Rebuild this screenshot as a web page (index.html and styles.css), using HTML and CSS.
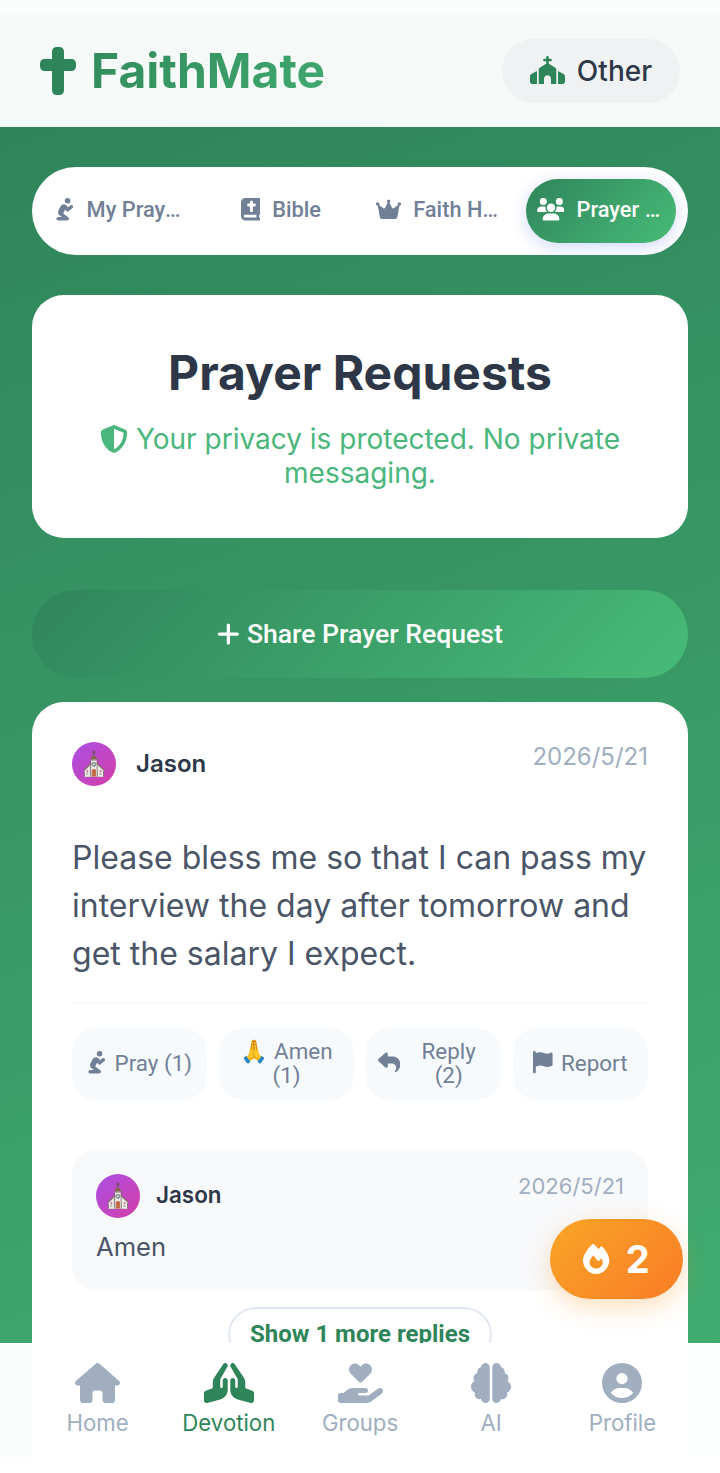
FILE: index.html
```html
<!DOCTYPE html>
<html lang="en">
<head>
    <meta charset="UTF-8">
    <meta name="viewport" content="width=device-width, initial-scale=1.0">
    <title>FaithMate</title>
    <link rel="stylesheet" href="styles.css">
</head>
<body>
    <div class="app">
        <div class="top-strip"></div>
        <header class="header">
            <div class="logo">
                <svg class="logo-icon" viewBox="0 0 384 512"><path d="M176 0c-26.5 0-48 21.5-48 48v80H48c-26.5 0-48 21.5-48 48v32c0 26.5 21.5 48 48 48h80V464c0 26.5 21.5 48 48 48h32c26.5 0 48-21.5 48-48V256h80c26.5 0 48-21.5 48-48V176c0-26.5-21.5-48-48-48H256V48c0-26.5-21.5-48-48-48H176z"/></svg>
                <span class="logo-text">FaithMate</span>
            </div>
            <div class="denom">
                <svg class="denom-icon" viewBox="0 0 640 512"><path d="M344 24c0-13.3-10.7-24-24-24s-24 10.7-24 24V48H264c-13.3 0-24 10.7-24 24s10.7 24 24 24h32v46.4L183.3 210c-14.5 8.7-23.3 24.3-23.3 41.2V512h96V416c0-35.3 28.7-64 64-64s64 28.7 64 64v96h96V251.2c0-16.9-8.8-32.5-23.3-41.2L344 142.4V96h32c13.3 0 24-10.7 24-24s-10.7-24-24-24H344V24zM24.9 330.3C9.5 338.8 0 354.9 0 372.4V464c0 26.5 21.5 48 48 48h80V273.6L24.9 330.3zM592 512c26.5 0 48-21.5 48-48V372.4c0-17.5-9.5-33.6-24.9-42.1L512 273.6V512h80z"/></svg>
                <span>Other</span>
            </div>
        </header>

        <main class="main">
            <nav class="tabs">
                <div class="tab">
                    <svg class="tab-icon" viewBox="0 0 448 512"><path d="M352 64A64 64 0 1 0 224 64a64 64 0 1 0 128 0zM232.7 264l22.9 31.5c6.5 8.9 16.3 14.7 27.2 16.1s21.9-1.7 30.4-8.7l88-72c17.1-14 19.6-39.2 5.6-56.3s-39.2-19.6-56.3-5.6l-55.2 45.2-26.2-36C253.6 156.7 228.6 144 202 144c-30.9 0-59.2 17.1-73.6 44.4L79.8 280.9c-20.2 38.5-9.4 85.9 25.6 111.8L158.6 432H72c-22.1 0-40 17.9-40 40s17.9 40 40 40H280c17.3 0 32.6-11.1 38-27.5s-.3-34.4-14.2-44.7L187.7 354l45-90z"/></svg>
                    <span class="tab-label">My Prayers</span>
                </div>
                <div class="tab">
                    <svg class="tab-icon" viewBox="0 0 448 512"><path d="M96 0C43 0 0 43 0 96V416c0 53 43 96 96 96H384h32c17.7 0 32-14.3 32-32s-14.3-32-32-32V384c17.7 0 32-14.3 32-32V32c0-17.7-14.3-32-32-32H384 96zm0 384H352v64H96c-17.7 0-32-14.3-32-32s14.3-32 32-32zM208 80c0-8.8 7.2-16 16-16h32c8.8 0 16 7.2 16 16v48h48c8.8 0 16 7.2 16 16v32c0 8.8-7.2 16-16 16H272V304c0 8.8-7.2 16-16 16H224c-8.8 0-16-7.2-16-16V192H160c-8.8 0-16-7.2-16-16V144c0-8.8 7.2-16 16-16h48V80z"/></svg>
                    <span class="tab-label">Bible</span>
                </div>
                <div class="tab">
                    <svg class="tab-icon" viewBox="0 0 576 512"><path d="M309 106c11.4-7 19-19.7 19-34c0-22.1-17.9-40-40-40s-40 17.9-40 40c0 14.4 7.6 27 19 34L209.7 220.6c-9.1 18.2-32.7 23.4-48.6 10.7L72 160c5-6.7 8-15 8-24c0-22.1-17.9-40-40-40S0 113.9 0 136s17.9 40 40 40c.2 0 .5 0 .7 0L86.4 427.4c5.5 30.4 32 52.6 63 52.6H426.6c30.9 0 57.4-22.1 63-52.6L535.3 176c.2 0 .5 0 .7 0c22.1 0 40-17.9 40-40s-17.9-40-40-40s-40 17.9-40 40c0 9 3 17.3 8 24l-89.1 71.3c-15.9 12.7-39.5 7.5-48.6-10.7L309 106z"/></svg>
                    <span class="tab-label">Faith Heroes</span>
                </div>
                <div class="tab active">
                    <svg class="tab-icon" viewBox="0 0 640 512"><path d="M144 0a80 80 0 1 1 0 160A80 80 0 1 1 144 0zM512 0a80 80 0 1 1 0 160A80 80 0 1 1 512 0zM0 298.7C0 239.8 47.8 192 106.7 192h42.7c15.9 0 31 3.5 44.6 9.7c-1.3 7.2-1.9 14.7-1.9 22.3c0 38.2 16.8 72.5 43.3 96c-.2 0-.4 0-.7 0H21.3C9.6 320 0 310.4 0 298.7zM405.3 320c-.2 0-.4 0-.7 0c26.6-23.5 43.3-57.8 43.3-96c0-7.6-.7-15-1.9-22.3c13.6-6.3 28.7-9.7 44.6-9.7h42.7C592.2 192 640 239.8 640 298.7c0 11.8-9.6 21.3-21.3 21.3H405.3zM224 224a96 96 0 1 1 192 0 96 96 0 1 1 -192 0zM128 485.3C128 411.7 187.7 352 261.3 352H378.7C452.3 352 512 411.7 512 485.3c0 14.7-11.9 26.7-26.7 26.7H154.7c-14.7 0-26.7-11.9-26.7-26.7z"/></svg>
                    <span class="tab-label">Prayer Requests</span>
                </div>
            </nav>

            <section class="intro">
                <h1 class="intro-title">Prayer Requests</h1>
                <p class="intro-note">
                    <svg class="shield" viewBox="0 0 512 512"><path d="M256 0c4.6 0 9.2 1 13.4 2.9L457.7 82.8c22 9.3 38.4 31 38.3 57.2c-.5 99.2-41.3 280.7-213.6 363.2c-16.7 8-36.1 8-52.8 0C57.3 420.7 16.5 239.2 16 140c-.1-26.2 16.3-47.9 38.3-57.2L242.7 2.9C246.8 1 251.4 0 256 0zm0 66.8V444.8C394 378 431.1 230.1 432 141.4L256 66.8l0 0z"/></svg>
                    Your privacy is protected. No private messaging.
                </p>
            </section>

            <button class="share-btn">
                <svg class="share-icon" viewBox="0 0 448 512"><path d="M256 80c0-17.7-14.3-32-32-32s-32 14.3-32 32V224H48c-17.7 0-32 14.3-32 32s14.3 32 32 32H192V432c0 17.7 14.3 32 32 32s32-14.3 32-32V288H400c17.7 0 32-14.3 32-32s-14.3-32-32-32H256V80z"/></svg>
                Share Prayer Request
            </button>

            <article class="post">
                <div class="post-head">
                    <div class="author">
                        <div class="avatar">⛪</div>
                        <span class="author-name">Jason</span>
                    </div>
                    <span class="post-date">2026/5/21</span>
                </div>
                <p class="post-text">Please bless me so that I can pass my interview the day after tomorrow and get the salary I expect.</p>
                <div class="actions">
                    <button class="action">
                        <svg class="action-icon" viewBox="0 0 448 512"><path d="M352 64A64 64 0 1 0 224 64a64 64 0 1 0 128 0zM232.7 264l22.9 31.5c6.5 8.9 16.3 14.7 27.2 16.1s21.9-1.7 30.4-8.7l88-72c17.1-14 19.6-39.2 5.6-56.3s-39.2-19.6-56.3-5.6l-55.2 45.2-26.2-36C253.6 156.7 228.6 144 202 144c-30.9 0-59.2 17.1-73.6 44.4L79.8 280.9c-20.2 38.5-9.4 85.9 25.6 111.8L158.6 432H72c-22.1 0-40 17.9-40 40s17.9 40 40 40H280c17.3 0 32.6-11.1 38-27.5s-.3-34.4-14.2-44.7L187.7 354l45-90z"/></svg>
                        <span>Pray (1)</span>
                    </button>
                    <button class="action">
                        <span>🙏 Amen (1)</span>
                    </button>
                    <button class="action">
                        <svg class="action-icon" viewBox="0 0 512 512"><path d="M205 34.8c11.5 5.1 19 16.6 19 29.2v64H336c97.2 0 176 78.8 176 176c0 113.3-81.5 163.9-100.2 174.1c-2.5 1.4-5.3 1.9-8.1 1.9c-10.9 0-19.7-8.9-19.7-19.7c0-7.5 4.3-14.4 9.8-19.5c9.4-8.8 22.2-26.4 22.2-56.7c0-53-43-96-96-96H224v64c0 12.6-7.4 24.1-19 29.2s-25 3-34.4-5.4l-160-144C3.9 225.7 0 217.1 0 208s3.9-17.7 10.6-23.8l160-144c9.4-8.5 22.9-10.6 34.4-5.4z"/></svg>
                        <span>Reply (2)</span>
                    </button>
                    <button class="action">
                        <svg class="action-icon" viewBox="0 0 448 512"><path d="M64 32C64 14.3 49.7 0 32 0S0 14.3 0 32V64 368 480c0 17.7 14.3 32 32 32s32-14.3 32-32V352l64.3-16.1c41.1-10.3 84.6-5.5 122.5 13.4c44.2 22.1 95.5 24.8 141.7 7.4l34.7-13c12.5-4.7 20.8-16.6 20.8-30V66.1c0-23-24.2-38-44.8-27.7l-9.6 4.8c-46.3 23.2-100.8 23.2-147.1 0c-35.1-17.6-75.4-22-113.5-12.5L64 48V32z"/></svg>
                        <span>Report</span>
                    </button>
                </div>
                <div class="reply">
                    <div class="reply-head">
                        <div class="author reply-author">
                            <div class="avatar">⛪</div>
                            <span class="reply-name">Jason</span>
                        </div>
                        <span class="reply-date">2026/5/21</span>
                    </div>
                    <p class="reply-text">Amen</p>
                </div>
                <div class="more-wrap">
                    <button class="more-btn">Show 1 more replies</button>
                </div>
            </article>
        </main>

        <button class="streak">
            <svg class="streak-icon" viewBox="0 0 448 512"><path d="M159.3 5.4c7.8-7.3 19.9-7.2 27.7 .1c27.6 25.9 53.5 53.8 77.7 84c11-14.4 23.5-30.1 37-42.9c7.9-7.4 20.1-7.4 28 .1c34.6 33 63.9 76.6 84.5 118c20.3 40.8 33.8 82.5 33.8 111.9C448 404.2 348.2 512 224 512C98.4 512 0 404.1 0 276.5c0-38.4 17.8-85.3 45.4-131.7C73.3 97.7 112.7 48.6 159.3 5.4zM225.7 416c25.3 0 47.7-7 68.8-21c42.1-29.4 53.4-88.2 28.1-134.4c-4.5-9-16-9.6-22.5-2l-25.2 29.3c-6.6 7.6-18.5 7.4-24.7-.5c-16.5-21-46-58.5-62.8-79.8c-6.3-8-18.3-8.1-24.7-.1c-33.8 42.5-50.8 69.3-50.8 99.4C112 375.4 162.6 416 225.7 416z"/></svg>
            <span>2</span>
        </button>

        <nav class="bottom-nav">
            <div class="nav-item">
                <svg class="nav-icon" viewBox="0 0 576 512"><path d="M575.8 255.5c0 18-15 32.1-32 32.1h-32l.7 160.2c0 2.7-.2 5.4-.5 8.1V472c0 22.1-17.9 40-40 40H456c-1.1 0-2.2 0-3.3-.1c-1.4 .1-2.8 .1-4.2 .1H416 392c-22.1 0-40-17.9-40-40V448 384c0-17.7-14.3-32-32-32H256c-17.7 0-32 14.3-32 32v64 24c0 22.1-17.9 40-40 40H160 128.1c-1.5 0-3-.1-4.5-.2c-1.2 .1-2.4 .2-3.6 .2H104c-22.1 0-40-17.9-40-40V360c0-.9 0-1.9 .1-2.8V287.6H32c-18 0-32-14-32-32.1c0-9 3-17 10-24L266.4 8c7-7 15-8 22-8s15 2 21 7L564.8 231.5c8 7 12 15 11 24z"/></svg>
                <span>Home</span>
            </div>
            <div class="nav-item active">
                <svg class="nav-icon" viewBox="0 0 640 512"><path d="M351.2 4.8c3.2-2 6.6-3.3 10-4.1c4.7-1 9.6-.9 14.1 .1c7.7 1.8 14.8 6.5 19.4 13.6L514.6 194.2c8.8 13.1 13.4 28.6 13.4 44.4v73.5c0 6.9 4.4 13 10.9 15.2l79.2 26.4C631.2 358 640 370.2 640 384v96c0 9.9-4.6 19.3-12.5 25.4s-18.1 8.1-27.7 5.5L431 465.9c-56-14.9-95-65.7-95-123.7V224c0-17.7 14.3-32 32-32s32 14.3 32 32v80c0 8.8 7.2 16 16 16s16-7.2 16-16V219.1c0-7-1.8-13.8-5.3-19.8L340.3 48.1c-1.7-3-2.9-6.1-3.6-9.3c-1-4.7-1-9.6 .1-14.1c1.9-8 6.8-15.2 14.3-19.9zm-62.4 0c7.5 4.6 12.4 11.9 14.3 19.9c1.1 4.6 1.2 9.4 .1 14.1c-.7 3.2-1.9 6.3-3.6 9.3L213.3 199.3c-3.5 6-5.3 12.9-5.3 19.8V304c0 8.8 7.2 16 16 16s16-7.2 16-16V224c0-17.7 14.3-32 32-32s32 14.3 32 32V342.3c0 58-39 108.7-95 123.7l-168.7 45c-9.6 2.6-19.9 .5-27.7-5.5S0 489.9 0 480V384c0-13.8 8.8-26 21.9-30.4l79.2-26.4c6.5-2.2 10.9-8.3 10.9-15.2V238.5c0-15.8 4.7-31.2 13.4-44.4L245.2 14.5c4.6-7.1 11.7-11.8 19.4-13.6c4.6-1.1 9.4-1.2 14.1-.1c3.5 .8 6.9 2.2 10 4.1z"/></svg>
                <span>Devotion</span>
            </div>
            <div class="nav-item">
                <svg class="nav-icon" viewBox="0 0 576 512"><path d="M163.9 136.9c-29.4-29.8-29.4-78.2 0-108s77-29.8 106.4 0l17.7 18 17.7-18c29.4-29.8 77-29.8 106.4 0s29.4 78.2 0 108L310.5 240.1c-6.2 6.3-14.3 9.4-22.5 9.4s-16.3-3.1-22.5-9.4L163.9 136.9zM568.2 336.3c13.1 17.8 9.3 42.8-8.5 55.9L433.1 485.5c-23.4 17.2-51.6 26.5-80.7 26.5H192 32c-17.7 0-32-14.3-32-32V416c0-17.7 14.3-32 32-32H68.8l44.9-36c22.7-18.2 50.9-28 80-28H272h16 64c17.7 0 32 14.3 32 32s-14.3 32-32 32H288 272c-8.8 0-16 7.2-16 16s7.2 16 16 16H392.6l119.7-88.2c17.8-13.1 42.8-9.3 55.9 8.5zM193.6 384l0 0-.9 0c.3 0 .6 0 .9 0z"/></svg>
                <span>Groups</span>
            </div>
            <div class="nav-item">
                <svg class="nav-icon" viewBox="0 0 512 512"><path d="M184 0c30.9 0 56 25.1 56 56V456c0 30.9-25.1 56-56 56c-28.9 0-52.7-21.9-55.7-50.1c-5.2 1.4-10.7 2.1-16.3 2.1c-35.3 0-64-28.7-64-64c0-7.4 1.3-14.6 3.6-21.2C21.4 367.4 0 338.2 0 304c0-31.9 18.7-59.5 45.8-72.3C37.1 220.8 32 207 32 192c0-30.7 21.6-56.3 50.4-62.6C80.8 123.9 80 118 80 112c0-29.9 20.6-55.1 48.3-62.1C131.3 21.9 155.1 0 184 0zM328 0c28.9 0 52.6 21.9 55.7 49.9c27.8 7 48.3 32.1 48.3 62.1c0 6-.8 11.9-2.4 17.4c28.8 6.2 50.4 31.9 50.4 62.6c0 15-5.1 28.8-13.8 39.7C493.3 244.5 512 272.1 512 304c0 34.2-21.4 63.4-51.6 74.8c2.3 6.6 3.6 13.8 3.6 21.2c0 35.3-28.7 64-64 64c-5.6 0-11.1-.7-16.3-2.1c-3 28.2-26.8 50.1-55.7 50.1c-30.9 0-56-25.1-56-56V56c0-30.9 25.1-56 56-56z"/></svg>
                <span>AI</span>
            </div>
            <div class="nav-item">
                <svg class="nav-icon" viewBox="0 0 512 512"><path d="M399 384.2C376.9 345.8 335.4 320 288 320H224c-47.4 0-88.9 25.8-111 64.2c35.2 39.2 86.2 63.8 143 63.8s107.8-24.7 143-63.8zM0 256a256 256 0 1 1 512 0A256 256 0 1 1 0 256zm256 16a72 72 0 1 0 0-144 72 72 0 1 0 0 144z"/></svg>
                <span>Profile</span>
            </div>
        </nav>
    </div>
</body>
</html>
```

FILE: styles.css
```css
* {
    box-sizing: border-box;
}
body {
    margin: 0;
    background-color: #fff;
    font-family: Inter, "Noto Sans", sans-serif;
}
p, h1 {
    margin: 0;
}
button {
    border: none;
    font: inherit;
    cursor: pointer;
}
.app {
    position: relative;
    display: flex;
    flex-direction: column;
    height: 1473px;
    padding-bottom: 16px;
    overflow: hidden;
}
.top-strip {
    height: 15px;
    background-color: #fbfcfc;
}

/* header */
.header {
    display: flex;
    justify-content: space-between;
    align-items: center;
    height: 112px;
    padding: 0 40px;
    background-color: #f5f9f8;
}
.logo {
    display: flex;
    align-items: center;
    gap: 16px;
}
.logo-icon {
    width: 36px;
    height: 48px;
    fill: #2f855a;
}
.logo-text {
    margin-left: -1px;
    padding-bottom: 2px;
    font-size: 48px;
    font-weight: 700;
    color: #38a169;
    background: linear-gradient(135deg, #318a5c, #40a96f);
    -webkit-background-clip: text;
    background-clip: text;
    -webkit-text-fill-color: transparent;
}
.denom {
    display: flex;
    align-items: center;
    gap: 12px;
    height: 64px;
    padding: 0 28px;
    border-radius: 32px;
    background-color: #f0f1f2;
    font-size: 28px;
    font-weight: 500;
    color: #2d3748;
}
.denom-icon {
    width: 35px;
    height: 28px;
    margin-bottom: 2px;
    fill: #2f855a;
}

/* main */
.main {
    flex: 1;
    min-height: 0;
    padding: 40px 32px 0;
    overflow: hidden;
    background: linear-gradient(160deg, #2f855a, #48bb78 130%);
}
.tabs {
    display: flex;
    gap: 10px;
    height: 88px;
    padding: 12px;
    border-radius: 44px;
    background-color: #fff;
}
.tab {
    display: flex;
    flex: 1;
    justify-content: center;
    align-items: center;
    gap: 12px;
    min-width: 0;
    padding: 0 9px 3px 11px;
    border-radius: 32px;
    font-family: Roboto, sans-serif;
    font-size: 21.8px;
    font-weight: 500;
    color: #718096;
}
.tab.active {
    background: linear-gradient(135deg, #2f855a, #48bb78);
    box-shadow: 0 4px 16px rgba(102, 126, 234, 0.3);
    color: #fff;
}
.tab-icon {
    flex-shrink: 0;
    height: 22.4px;
    fill: currentColor;
}
.tab-label {
    overflow: hidden;
    white-space: nowrap;
    text-overflow: ellipsis;
}
.intro {
    margin-top: 40px;
    padding: 49px 40px 48px;
    border-radius: 32px;
    background-color: #fff;
    text-align: center;
}
.intro-title {
    font-size: 48px;
    font-weight: 700;
    line-height: 58px;
    color: #2d3748;
}
.intro-note {
    margin-top: 20px;
    font-size: 28px;
    line-height: 34px;
    color: #4ab67c;
}
.shield {
    height: 28px;
    width: 28px;
    vertical-align: -4px;
    fill: #4ab67c;
}
.share-btn {
    display: flex;
    justify-content: center;
    align-items: center;
    gap: 7px;
    width: 100%;
    height: 88px;
    padding-bottom: 2px;
    margin-top: 52px;
    border-radius: 44px;
    background: linear-gradient(135deg, #2f855a, #48bb78);
    font-family: Roboto, sans-serif;
    font-size: 26.6px;
    font-weight: 500;
    color: #fff;
}
.share-icon {
    height: 26px;
    fill: #fff;
}

/* post */
.post {
    margin-top: 24px;
    padding: 40px 40px 120px;
    border-radius: 32px;
    background-color: #fff;
}
.post-head, .reply-head {
    display: flex;
    justify-content: space-between;
    align-items: flex-start;
}
.author {
    display: flex;
    align-items: center;
    gap: 20px;
}
.reply-author {
    gap: 16px;
}
.avatar {
    display: flex;
    justify-content: center;
    align-items: center;
    width: 44px;
    height: 44px;
    border-radius: 50%;
    background: linear-gradient(135deg, #a94fe6, #d63da6);
    font-family: "Noto Color Emoji", sans-serif;
    font-size: 24px;
}
.author-name {
    padding-bottom: 2px;
    font-size: 24px;
    font-weight: 600;
    color: #2d3748;
}
.post-date {
    font-size: 24px;
    line-height: 30px;
    color: #a0aec0;
}
.post-text {
    margin-top: 48px;
    font-size: 32px;
    line-height: 48px;
    color: #4a5568;
}
.actions {
    display: grid;
    grid-template-columns: repeat(4, 1fr);
    gap: 12px;
    margin-top: 24px;
    padding-top: 24px;
    border-top: 2px solid #f7f8fa;
}
.action {
    display: flex;
    justify-content: center;
    align-items: center;
    gap: 8px;
    height: 72px;
    padding: 0 12px 3px;
    border-radius: 24px;
    background-color: #f7fafc;
    font-family: Roboto, sans-serif;
    font-size: 22.4px;
    line-height: 24px;
    color: #718096;
}
.action-icon {
    flex-shrink: 0;
    height: 22.4px;
    fill: #718096;
}
.reply {
    margin-top: 50px;
    height: 140px;
    padding: 24px;
    border-radius: 24px;
    background-color: #f8f9fb;
}
.reply-name {
    padding-bottom: 4px;
    font-size: 22.4px;
    font-weight: 600;
    color: #2d3748;
}
.reply-date {
    font-size: 22px;
    line-height: 24px;
    color: #a0aec0;
}
.reply-text {
    margin-top: 10px;
    font-size: 25.6px;
    line-height: 38px;
    color: #4a5568;
}
.more-wrap {
    display: flex;
    justify-content: center;
    margin-top: 17px;
}
.more-btn {
    height: 56px;
    padding: 0 20px 2px;
    border: 2px solid #e2e8f0;
    border-radius: 28px;
    background-color: #fff;
    font-family: Roboto, sans-serif;
    font-size: 24px;
    font-weight: 700;
    color: #2f855a;
}

/* floating things */
.streak {
    position: absolute;
    top: 1219px;
    left: 550px;
    display: flex;
    justify-content: center;
    align-items: center;
    gap: 16px;
    width: 133px;
    height: 80px;
    border-radius: 40px;
    background: linear-gradient(135deg, #f9a526, #f97c26);
    box-shadow: 0 8px 24px rgba(249, 150, 38, 0.3);
    font-size: 38px;
    font-weight: 700;
    color: #fff;
}
.streak-icon {
    height: 30px;
    fill: #fff;
}
.bottom-nav {
    position: absolute;
    top: 1343px;
    left: 0;
    right: 0;
    display: flex;
    height: 114px;
    padding: 20px 32px 0;
    background-color: rgba(255, 255, 255, 0.98);
}
.nav-item {
    display: flex;
    flex: 1;
    flex-direction: column;
    align-items: center;
    gap: 6px;
    font-size: 22.2px;
    color: #a0aec0;
}
.nav-item.active {
    color: #2f855a;
}
.nav-icon {
    height: 40px;
    fill: currentColor;
}
```
